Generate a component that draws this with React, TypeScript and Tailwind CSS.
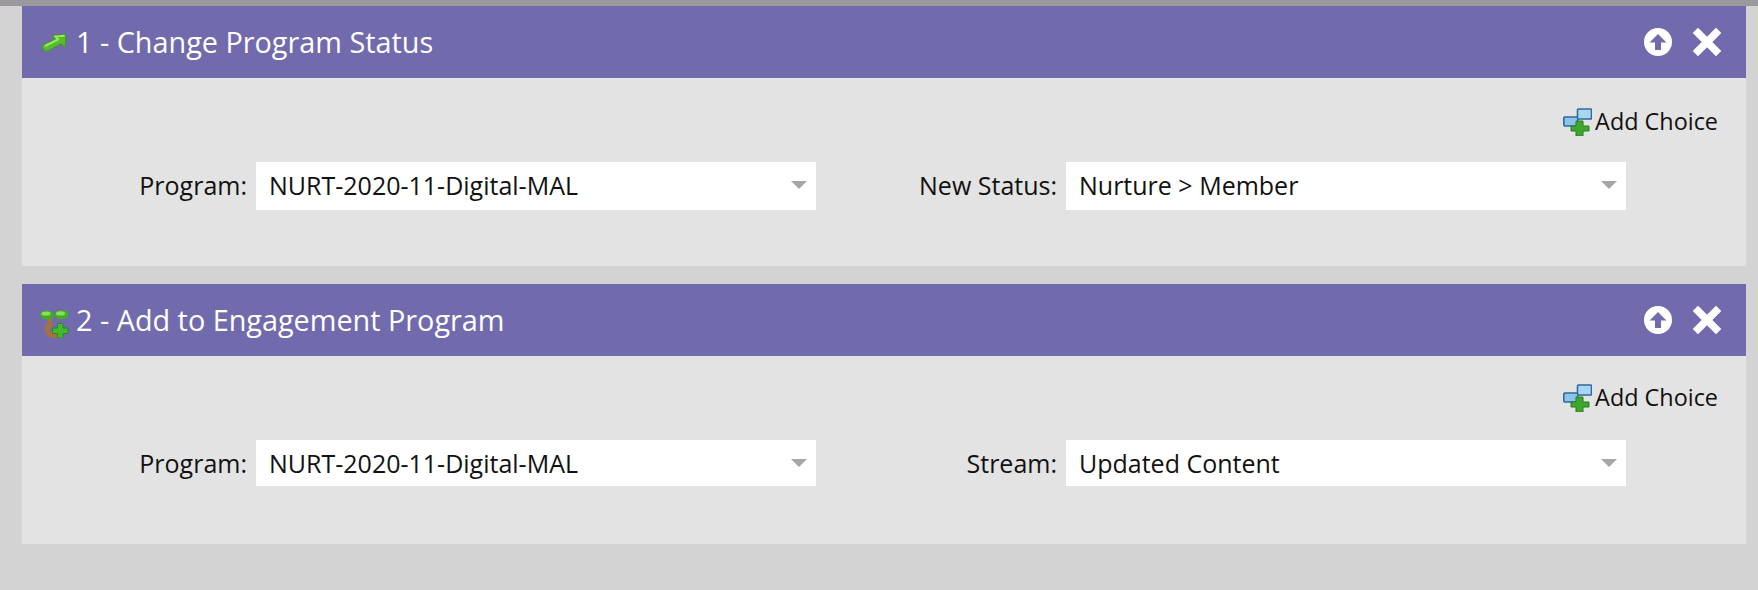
import React from 'react';
import { X } from 'lucide-react';

const ArrowIcon = () => (
  <svg width="27" height="21" viewBox="0 0 27 21">
    <path d="M3 13 L15.500 7 L12 3.500 L26 2.500 L25 15.500 L21 11.500 L8 19 Q4 20 3 17 Q2 14.500 3 13 Z" fill="#58bd2c" stroke="#3c9a1e" strokeWidth="1" strokeLinejoin="round" />
    <path d="M5 14 L18 7.500 L15.500 4.500 L24.500 3.800" fill="none" stroke="#9be862" strokeWidth="2" />
  </svg>
);

const SproutIcon = () => (
  <svg width="29" height="28" viewBox="0 0 29 28" className="mt-[7px]">
    <path d="M10 8 L10 14 Q6.500 17 7.500 21 Q9 26 17 26" fill="none" stroke="#a8703f" strokeWidth="5" />
    <ellipse cx="7" cy="5" rx="7" ry="4.600" fill="#43ab28" />
    <ellipse cx="6" cy="3.600" rx="4.500" ry="2.200" fill="#8ade5a" />
    <ellipse cx="21.500" cy="4.800" rx="7" ry="4.600" fill="#43ab28" />
    <ellipse cx="20.500" cy="3.400" rx="4.500" ry="2.200" fill="#8ade5a" />
    <path d="M17.500 13.500 H23 V18 H28 V23.500 H23 V28 H17.500 V23.500 H12.500 V18 H17.500 Z" fill="#43b92e" stroke="#2a8a20" strokeWidth="1" />
  </svg>
);

const ChoiceIcon = () => (
  <svg width="29" height="28" viewBox="0 0 29 28" className="shrink-0">
    <path d="M9 14 H19" stroke="#48607c" strokeWidth="2" />
    <rect x="0.800" y="9" width="14" height="9" rx="1" fill="#8cc4ea" stroke="#2f6a9c" strokeWidth="1.600" />
    <rect x="14.500" y="1" width="14" height="10" rx="1" fill="#a8d6f2" stroke="#2f6a9c" strokeWidth="1.600" />
    <path d="M13 13 H20 V18 H26 V23 H20 V28 H13 V23 H8 V18 H13 Z" fill="#3da82c" stroke="#2b7a28" strokeWidth="1" />
  </svg>
);

const UpIcon = () => (
  <svg width="28" height="28" viewBox="0 0 28 28">
    <path
      fillRule="evenodd"
      d="M14 0 A14 14 0 1 1 14 28 A14 14 0 1 1 14 0 Z M14 6 L5.500 14.500 H11 V22 H17 V14.500 H22.500 Z"
      fill="#fff"
    />
  </svg>
);

const Field = ({ label, value, tall }: { label: string; value: string; tall: boolean }) => (
  <>
    <div className={`pr-[9px] text-right text-[25px] leading-[34px] text-[#111] ${tall ? 'pb-[2px]' : 'pb-[1px]'}`}>{label}</div>
    <div className={`flex items-center justify-between bg-white pl-[13px] pr-[8px] text-[25px] leading-[34px] text-[#111] ${tall ? 'h-[48px] pb-[2px]' : 'h-[46px] pb-[1px]'}`}>
      <span>{value}</span>
      <span className="mr-[1px] h-0 w-0 border-x-[8px] border-t-[8px] border-x-transparent border-t-[#a6a6a6]" />
    </div>
  </>
);

const FlowStep = ({ icon, title, second, tall }: { icon: React.ReactNode; title: string; second: { label: string; value: string }; tall: boolean }) => (
  <section className="mx-[22px] w-[1724px]">
    <header className="flex h-[72px] items-center bg-[#716bae] pl-[18px] pr-[21px] text-white">
      <div className="flex w-[36px] shrink-0 items-center">{icon}</div>
      <h2 className="flex-1 text-[28.8px] font-normal leading-[40px]">{title}</h2>
      <div className="mr-[17px]">
        <UpIcon />
      </div>
      <X size={36} strokeWidth={5} strokeLinecap="square" />
    </header>
    <div className="h-[188px] bg-[#e3e3e3]">
      <div className={`flex items-center justify-end gap-[3px] pr-[28px] text-[23.4px] leading-[28px] text-[#111] ${tall ? 'pt-[29px]' : 'pt-[27px]'}`}>
        <ChoiceIcon />
        <span className="pb-[2px]">Add Choice</span>
      </div>
      <div className={`grid grid-cols-[234px_560px_250px_560px] items-center ${tall ? 'mt-[25px]' : 'mt-[27px]'}`}>
        <Field label="Program:" value="NURT-2020-11-Digital-MAL" tall={tall} />
        <Field label={second.label} value={second.value} tall={tall} />
      </div>
    </div>
  </section>
);

export default function App() {
  return (
    <div className="h-[590px] w-[1758px] overflow-hidden bg-[#d3d3d3] font-['Open_Sans',sans-serif]">
      <div className="h-[6px] bg-[#9b999c]" />
      <div className="flex flex-col gap-[18px]">
        <FlowStep icon={<ArrowIcon />} title="1 - Change Program Status" second={{ label: 'New Status:', value: 'Nurture > Member' }} tall />
        <FlowStep icon={<SproutIcon />} title="2 - Add to Engagement Program" second={{ label: 'Stream:', value: 'Updated Content' }} tall={false} />
      </div>
    </div>
  );
}
